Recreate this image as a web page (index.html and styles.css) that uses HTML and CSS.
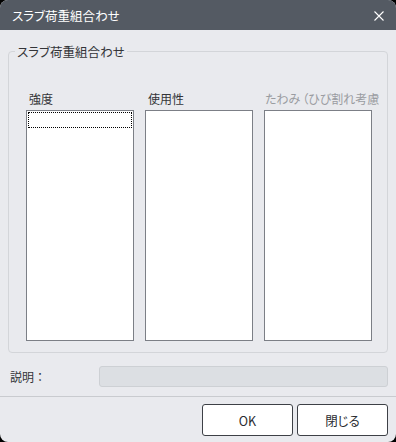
FILE: index.html
```html
<!DOCTYPE html>
<html lang="ja">
<head>
<meta charset="utf-8">
<link rel="stylesheet" href="styles.css">
</head>
<body>
<div class="window">
  <div class="titlebar">
    <span class="title">スラブ荷重組合わせ</span>
    <svg class="close" width="10" height="10" viewBox="0 0 10 10"><path d="M0.5 0.5 L9.5 9.5 M9.5 0.5 L0.5 9.5" stroke="#ffffff" stroke-width="1.1" fill="none"/></svg>
  </div>
  <div class="group">
    <div class="group-title">スラブ荷重組合わせ</div>
    <div class="columns">
      <div class="col">
        <div class="col-label">強度</div>
        <div class="listbox"><div class="focus"></div></div>
      </div>
      <div class="col">
        <div class="col-label">使用性</div>
        <div class="listbox"></div>
      </div>
      <div class="col">
        <div class="col-label disabled">たわみ<span class="paren">（</span>ひび割れ考慮）</div>
        <div class="listbox"></div>
      </div>
    </div>
  </div>
  <div class="desc-row">
    <span class="desc-label">説明<span class="full">：</span></span>
    <div class="desc-field"></div>
  </div>
  <div class="separator"></div>
  <div class="buttons">
    <button class="btn">OK</button>
    <button class="btn">閉じる</button>
  </div>
</div>
</body>
</html>
```
FILE: styles.css
```css
html, body {
  margin: 0;
  padding: 0;
  background: #000000;
}
body {
  font-family: "Noto Sans CJK JP", "Noto Sans", sans-serif;
  font-feature-settings: "palt";
  font-size: 12px;
  color: #333438;
}
.full {
  font-feature-settings: normal;
}
.paren {
  margin-left: 2px;
}
.window {
  width: 396px;
  height: 442px;
  background: #e9eaee;
  border-radius: 8px;
  overflow: hidden;
  display: flex;
  flex-direction: column;
}
.titlebar {
  height: 30px;
  flex: none;
  background: #545a63;
  display: flex;
  align-items: center;
  justify-content: space-between;
  padding: 0 12px 0 12px;
}
.title {
  color: #ffffff;
  font-size: 12.5px;
  line-height: 16px;
  margin-top: 2px;
}
.close {
  display: block;
  margin-top: 1px;
}
.group {
  margin: 21px 8px 0 8px;
  border: 1px solid #d3d5d9;
  border-radius: 4px;
  padding: 0 14px 11px 17px;
}
.group-title {
  margin-top: -9px;
  margin-left: -11px;
  padding: 0 2px;
  width: fit-content;
  background: #e9eaee;
  line-height: 17px;
  font-size: 12.5px;
}
.columns {
  display: flex;
  gap: 11px;
  margin-top: 31px;
}
.col {
  width: 108px;
  display: flex;
  flex-direction: column;
}
.col-label {
  line-height: 16px;
  height: 16px;
  margin-bottom: 3px;
  white-space: nowrap;
  overflow: hidden;
  width: 110px;
  font-size: 12px;
  padding-left: 3px;
}
.col-label.disabled {
  color: #9a9ca1;
  padding-left: 1px;
  width: 114px;
}
.listbox {
  height: 227px;
  background: #ffffff;
  border: 1px solid #7c7f86;
  padding: 1px;
}
.focus {
  height: 14px;
  border: 1px dotted #000000;
}
.desc-row {
  display: flex;
  align-items: center;
  justify-content: space-between;
  margin: 13px 8px 0 10px;
}
.desc-label {
  font-size: 12px;
  line-height: 16px;
}
.desc-field {
  width: 287px;
  height: 19px;
  background: #dcdfe3;
  border: 1px solid #cdd0d4;
  border-radius: 3px;
}
.separator {
  height: 1px;
  background: #c9cbcf;
  margin-top: 9px;
}
.buttons {
  display: flex;
  justify-content: flex-end;
  gap: 4px;
  margin: 7px 8px 0 0;
}
.btn {
  width: 91px;
  height: 32px;
  background: #ffffff;
  border: 1px solid #3d4046;
  border-radius: 3px;
  font-family: "Noto Sans CJK JP", "Noto Sans", sans-serif;
  font-feature-settings: "palt";
  font-size: 12.5px;
  color: #2a2c30;
  padding: 0;
}
```
